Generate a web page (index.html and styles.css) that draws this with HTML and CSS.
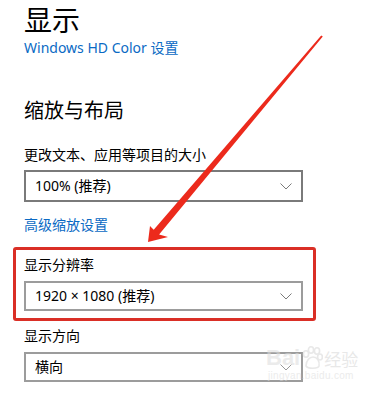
FILE: index.html
```html
<!DOCTYPE html>
<html lang="zh-CN">
<head>
<meta charset="utf-8">
<link rel="stylesheet" href="styles.css">
</head>
<body>
<main class="page">
  <h1 class="title">显示</h1>
  <a class="link first-link">Windows HD Color 设置</a>
  <h2 class="heading">缩放与布局</h2>
  <div class="label label-scale">更改文本、应用等项目的大小</div>
  <div class="select select-dark">
    <span class="select-text">100% (推荐)</span>
    <svg class="chev" width="12" height="7" viewBox="0 0 12 7"><polyline points="0.5,0.5 6,6 11.5,0.5" fill="none" stroke="#7a7a7a" stroke-width="1"/></svg>
  </div>
  <a class="link adv-link">高级缩放设置</a>
  <section class="highlight">
    <div class="label label-res">显示分辨率</div>
    <div class="select select-light select-res">
      <span class="select-text">1920 × 1080 (推荐)</span>
      <svg class="chev" width="12" height="7" viewBox="0 0 12 7"><polyline points="0.5,0.5 6,6 11.5,0.5" fill="none" stroke="#7a7a7a" stroke-width="1"/></svg>
    </div>
  </section>
  <div class="label label-orient">显示方向</div>
  <div class="select select-light select-orient">
    <span class="select-text">横向</span>
    <svg class="chev" width="12" height="7" viewBox="0 0 12 7"><polyline points="0.5,0.5 6,6 11.5,0.5" fill="none" stroke="#9a9a9a" stroke-width="1"/></svg>
  </div>
</main>

<div class="watermark">
  <div class="wm-top">
    <span class="wm-bai">Bai</span>
    <svg class="wm-paw" width="22" height="24" viewBox="0 0 22 24">
      <g fill="none" stroke="#d6d6d6" stroke-width="1.6">
        <ellipse cx="5" cy="8" rx="2.6" ry="3.2"/>
        <ellipse cx="10" cy="4" rx="2.6" ry="3.2"/>
        <ellipse cx="16" cy="5" rx="2.6" ry="3.2"/>
        <ellipse cx="19" cy="11" rx="2.4" ry="3"/>
        <path d="M5 20 C5 14 9 11 12 11 C16 11 19 15 18 20 C17 23 7 23 5 20 Z"/>
      </g>
    </svg>
    <span class="wm-jy">经验</span>
  </div>
  <div class="wm-url">jingyan.baidu.com</div>
</div>

<svg class="arrow" width="385" height="400" viewBox="0 0 385 400">
  <polygon fill="#ec2a1c" points="322.8,36.6 321.2,35.4 153.7,229.8 150,226 148,242 168,237 159.1,234.4"/>
</svg>
</body>
</html>
```

FILE: styles.css
```css
html, body {
  margin: 0;
  padding: 0;
  background: #ffffff;
}

body {
  width: 385px;
  height: 400px;
  overflow: hidden;
  position: relative;
  font-family: "Noto Sans", "Noto Sans CJK SC", sans-serif;
  color: #000000;
}

.page {
  margin-left: 24px;
  width: 279px;
  display: flex;
  flex-direction: column;
  align-items: flex-start;
}

.title {
  margin: 0;
  font-size: 28px;
  line-height: 38px;
  font-weight: 400;
  font-family: "Noto Sans CJK SC", sans-serif;
}

.link {
  display: block;
  color: #0a6ac4;
  font-size: 14px;
  line-height: 20px;
  text-decoration: none;
}

.first-link {
  margin-top: 0;
}

.heading {
  margin: 38px 0 0 0;
  font-size: 20px;
  line-height: 28px;
  font-weight: 400;
  font-family: "Noto Sans CJK SC", sans-serif;
}

.label {
  font-size: 14px;
  line-height: 20px;
  font-family: "Noto Sans CJK SC", sans-serif;
}

.label-scale {
  margin-top: 20px;
}

.select {
  box-sizing: border-box;
  width: 279px;
  display: flex;
  align-items: center;
  justify-content: space-between;
  padding: 0 9px 0 9px;
  font-size: 14px;
  background: #ffffff;
}

.select-dark {
  height: 32px;
  margin-top: 6px;
  border: 2px solid #7a7a7a;
}

.select-light {
  height: 30px;
  border: 2px solid #9c9c9c;
}

.select-text {
  line-height: 20px;
}

.adv-link {
  margin-top: 12px;
  font-family: "Noto Sans CJK SC", sans-serif;
}

.highlight {
  box-sizing: content-box;
  width: 279px;
  margin: 13px -13px 0 -11px;
  padding: 4px 10px 7px 8px;
  border: 3px solid #da2f26;
  border-radius: 3px;
}

.select-res {
  margin-top: 7px;
}

.label-orient {
  margin-top: 4px;
}

.select-orient {
  margin-top: 7px;
}

.watermark {
  position: absolute;
  left: 266px;
  top: 346px;
  opacity: 0.55;
  color: #d9d9d9;
  font-family: "Liberation Sans", sans-serif;
}

.wm-top {
  display: flex;
  align-items: flex-end;
  gap: 1px;
}

.wm-bai {
  font-size: 22px;
  line-height: 24px;
  font-weight: 700;
  color: #dcdcdc;
}

.wm-jy {
  font-size: 17px;
  line-height: 22px;
  font-family: "Noto Sans CJK SC", sans-serif;
  color: #d6d6d6;
}

.wm-url {
  font-size: 10px;
  line-height: 12px;
  margin-left: 2px;
  color: #dcdcdc;
  letter-spacing: 0.3px;
}

.arrow {
  position: absolute;
  left: 0;
  top: 0;
  pointer-events: none;
}
```
